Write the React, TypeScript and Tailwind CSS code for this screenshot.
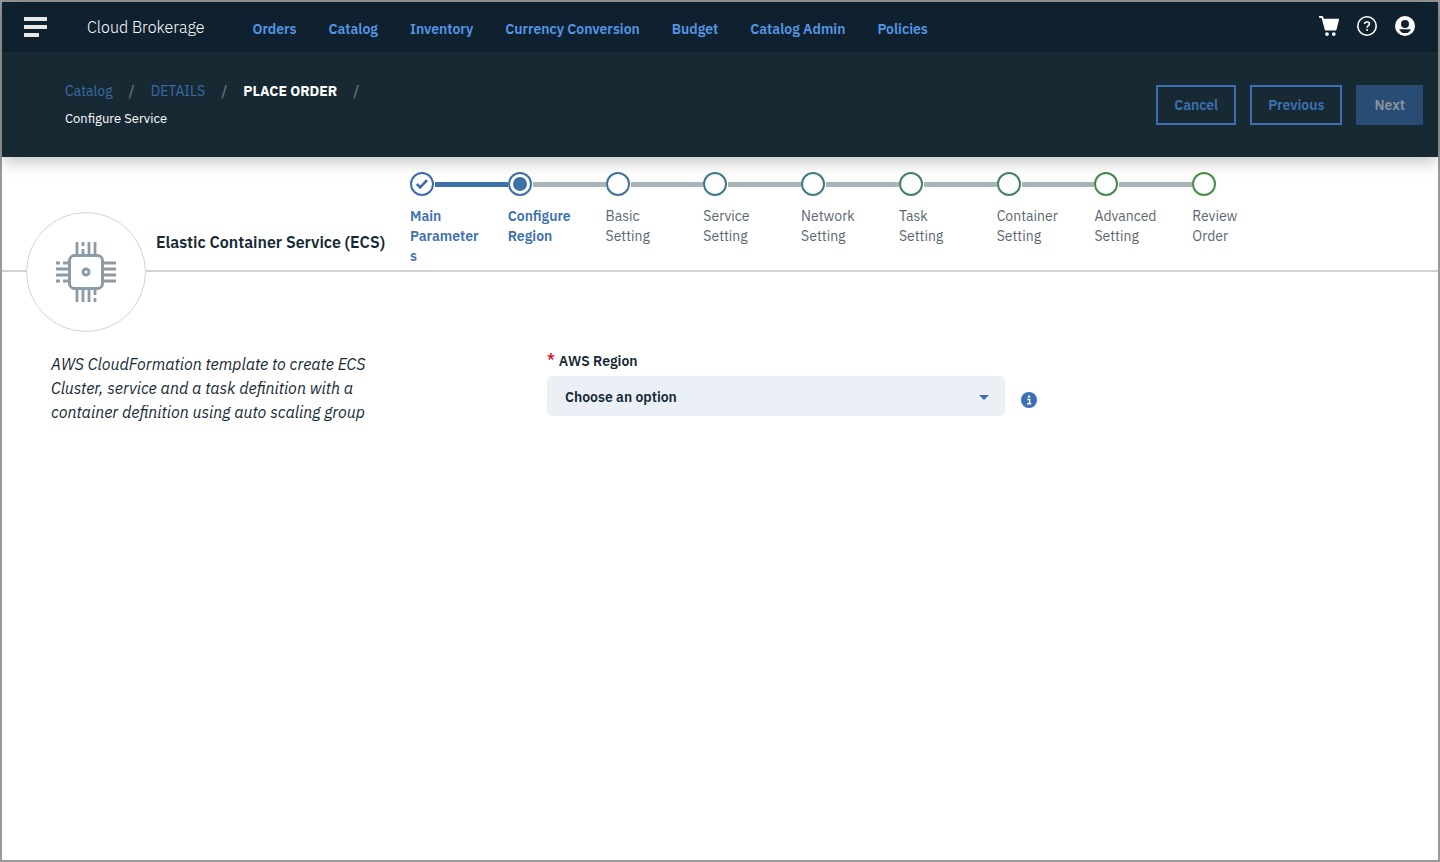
import { useState } from 'react'

interface Step {
  label: string
  ring: string
  state: 'done' | 'current' | 'todo'
}

const NAV_ITEMS = [
  'Orders',
  'Catalog',
  'Inventory',
  'Currency Conversion',
  'Budget',
  'Catalog Admin',
  'Policies',
]

const STEPS: Step[] = [
  { label: 'Main Parameters', ring: 'border-[#3d6cb0]', state: 'done' },
  { label: 'Configure Region', ring: 'border-[#3d70a8]', state: 'current' },
  { label: 'Basic Setting', ring: 'border-[#3f749b]', state: 'todo' },
  { label: 'Service Setting', ring: 'border-[#40788e]', state: 'todo' },
  { label: 'Network Setting', ring: 'border-[#417c82]', state: 'todo' },
  { label: 'Task Setting', ring: 'border-[#428073]', state: 'todo' },
  { label: 'Container Setting', ring: 'border-[#448465]', state: 'todo' },
  { label: 'Advanced Setting', ring: 'border-[#468955]', state: 'todo' },
  { label: 'Review Order', ring: 'border-[#4a8d45]', state: 'todo' },
]

const REGIONS = ['us-east-1', 'us-east-2', 'us-west-1', 'us-west-2', 'eu-west-1']

function CartIcon() {
  return (
    <svg viewBox="0 0 20 20" className="h-5 w-5" fill="currentColor">
      <path d="M0 0h3.2a1 1 0 0 1 .9.7l.7 2H19.2a.8.8 0 0 1 .8 1l-2.4 9.5a1.6 1.6 0 0 1-1.5 1.2H6.8a1 1 0 0 1-1-.7L2.6 1.9H.8a.8.8 0 0 1-.8-.8z" />
      <circle cx="8" cy="18.1" r="1.9" />
      <circle cx="14.8" cy="18.1" r="1.9" />
    </svg>
  )
}

function HelpIcon() {
  return (
    <svg viewBox="0 0 20 20" className="h-5 w-5" fill="none" stroke="currentColor">
      <circle cx="10" cy="10" r="9.2" strokeWidth="1.6" />
      <path d="M7.6 8V7.6A2 2 0 0 1 9.6 6h.8a2 2 0 0 1 2 2c0 1.6-2.3 1.6-2.3 3.4v.4" strokeWidth="1.6" />
      <circle cx="10.1" cy="14" r="1" fill="currentColor" stroke="none" />
    </svg>
  )
}

function UserIcon() {
  return (
    <svg viewBox="0 0 20 20" className="h-5 w-5">
      <circle cx="10" cy="10" r="10" fill="currentColor" />
      <circle cx="10" cy="8" r="4" fill="#0f212e" />
      <path d="M4.5 13.2h11v1.2a7 7 0 0 1-11 0z" fill="#0f212e" />
    </svg>
  )
}

function ChipIcon() {
  return (
    <svg viewBox="0 0 60 60" className="h-[60px] w-[60px]" fill="none" stroke="#8c9ba5" strokeWidth="3">
      <rect x="13.5" y="13.5" width="33" height="33" rx="5" />
      <circle cx="30" cy="30" r="3" />
      {/* top pins */}
      <path d="M21 0v12M27 0v4M27 7v5M33 0v12M39 0v12" strokeWidth="2.8" />
      {/* bottom pins */}
      <path d="M21 48v12M27 48v12M33 48v12M39 48v5M39 56v4" strokeWidth="2.8" />
      {/* left pins */}
      <path d="M0 21h4M7 21h5M0 27h12M0 33h12M0 39h4M7 39h5" strokeWidth="2.8" />
      {/* right pins */}
      <path d="M48 21h12M48 27h12M48 33h12M48 39h12" strokeWidth="2.8" />
    </svg>
  )
}

function StepMarker({ step }: { step: Step }) {
  return (
    <span className={`flex h-6 w-6 shrink-0 items-center justify-center rounded-full border-2 bg-white ${step.ring}`}>
      {step.state === 'done' && (
        <svg viewBox="0 0 14 12" className="h-3 w-3.5" fill="none" stroke="#3d6cb0" strokeWidth="2.6">
          <path d="M1.8 6l3.4 3.4 6.8-7.2" />
        </svg>
      )}
      {step.state === 'current' && <span className="h-3.5 w-3.5 shrink-0 rounded-full bg-[#3d70a8]" />}
    </span>
  )
}

function Stepper() {
  return (
    <ol className="mr-[148px] grid flex-1 grid-cols-9">
      {STEPS.map((step, i) => (
        <li key={step.label}>
          <div className="flex h-6 items-center">
            <StepMarker step={step} />
            {i < STEPS.length - 1 && (
              <span className={`ml-px h-[5px] flex-1 ${step.state === 'done' ? 'bg-[#3d70a8]' : 'bg-[#a9b3ba]'}`} />
            )}
          </div>
          <p
            className={`mt-2.5 w-[70px] text-sm leading-5 break-words ${
              step.state === 'todo' ? 'text-[#5a6872]' : 'font-semibold text-[#3d70b2]'
            }`}
          >
            {step.label}
          </p>
        </li>
      ))}
    </ol>
  )
}

export default function App() {
  const [region, setRegion] = useState('')

  return (
    <div className="flex min-h-screen flex-col border-2 border-[#999999] bg-white font-['IBM_Plex_Sans',Roboto,sans-serif] text-[#152935]">
      <header className="relative z-10 shadow-[0_4px_16px_rgba(0,0,0,0.25)]">
        <div className="flex h-12.5 items-center bg-[#0f212e] pr-[23px] pl-[22px]">
          <button aria-label="Menu" className="flex w-[23px] flex-col gap-1">
            <span className="h-1 w-full bg-[#e6e8ea]" />
            <span className="h-1 w-full bg-[#e6e8ea]" />
            <span className="h-1 w-[15px] bg-[#e6e8ea]" />
          </button>
          <span className="ml-10 text-base font-light text-white">Cloud Brokerage</span>
          <nav className="ml-12 flex gap-8 pt-1 text-sm font-semibold text-[#5596e6]">
            {NAV_ITEMS.map((item) => (
              <a key={item} href="#">
                {item}
              </a>
            ))}
          </nav>
          <div className="ml-auto flex gap-[18px] pb-0.5 text-white">
            <button aria-label="Cart">
              <CartIcon />
            </button>
            <button aria-label="Help">
              <HelpIcon />
            </button>
            <button aria-label="Account">
              <UserIcon />
            </button>
          </div>
        </div>

        <div className="flex h-[105px] items-center justify-between bg-[#172a34] pr-[15px] pl-[63px]">
          <div>
            <div className="flex gap-4 text-sm leading-5 text-[#3d68a6]">
              <a href="#">Catalog</a>
              <span className="font-semibold text-[#5f6f79]">/</span>
              <a href="#">DETAILS</a>
              <span className="font-semibold text-[#5f6f79]">/</span>
              <span className="font-bold text-white">PLACE ORDER</span>
              <span className="font-semibold text-[#5f6f79]">/</span>
            </div>
            <h1 className="mt-2 text-[13px] leading-5 text-white">Configure Service</h1>
          </div>
          <div className="flex gap-3.5 text-sm font-semibold">
            <button className="h-10 border-2 border-[#3d70b2] px-4 text-[#3d70b2]">Cancel</button>
            <button className="h-10 border-2 border-[#3d70b2] px-4 text-[#3d70b2]">Previous</button>
            <button className="h-10 border-2 border-[#294c74] bg-[#294c74] px-4 text-[#8b959d]">Next</button>
          </div>
        </div>
      </header>

      <section className="relative flex border-b-2 border-[#d3d3d3] pt-[15px] pb-1">
        <div className="absolute top-[55px] left-6 flex h-[120px] w-[120px] items-center justify-center rounded-full border border-[#d3d3d3] bg-white">
          <ChipIcon />
        </div>
        <h2 className="w-[408px] shrink-0 pt-[58px] pl-[154px] text-base font-semibold whitespace-nowrap">
          Elastic Container Service (ECS)
        </h2>
        <Stepper />
      </section>

      <main className="flex pt-20 pl-[49px]">
        <p className="w-[340px] shrink-0 text-base leading-6 italic">
          AWS CloudFormation template to create ECS Cluster, service and a task definition with a container definition
          using auto scaling group
        </p>
        <div className="-mt-px ml-[156px]">
          <label htmlFor="region" className="flex gap-1 text-sm leading-5 font-semibold">
            <span className="leading-4 text-[#d0122c]">*</span>
            AWS Region
          </label>
          <div className="mt-[5px] flex items-center gap-4">
            <div className="relative">
              <select
                id="region"
                value={region}
                onChange={(e) => setRegion(e.target.value)}
                className="h-10 w-[458px] appearance-none rounded-[5px] bg-[#ebf0f7] pt-0.5 pl-[18px] text-sm font-semibold"
              >
                <option value="">Choose an option</option>
                {REGIONS.map((r) => (
                  <option key={r} value={r}>
                    {r}
                  </option>
                ))}
              </select>
              <svg viewBox="0 0 10 5" className="pointer-events-none absolute top-[19px] right-4 h-[5px] w-2.5" fill="#3d70b2">
                <path d="M0 0h10L5 5z" />
              </svg>
            </div>
            <button aria-label="More information" className="mt-2">
              <svg viewBox="0 0 16 16" className="h-4 w-4">
                <circle cx="8" cy="8" r="8" fill="#3d70b2" />
                <circle cx="8" cy="4.6" r="1.2" fill="#fff" />
                <path d="M6.2 7.4h2.4v4.2M6 11.7h4.2" fill="none" stroke="#fff" strokeWidth="1.5" />
              </svg>
            </button>
          </div>
        </div>
      </main>
    </div>
  )
}
